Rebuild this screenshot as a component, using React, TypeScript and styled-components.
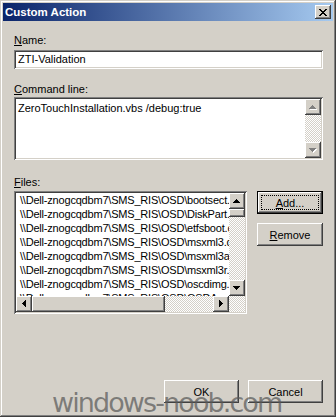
import React from 'react';
import styled, { createGlobalStyle, css } from 'styled-components';

const FACE = '#d4d0c8';
const SHADOW = '#808080';
const DARK = '#404040';
const HILITE = '#ffffff';

const FILE_ROOT = '\\\\Dell-znogcqdbm7\\SMS_RIS\\OSD\\';
const FILES = [
  'bootsect.exe',
  'DiskPart.exe',
  'etfsboot.com',
  'msxml3.dll',
  'msxml3a.dll',
  'msxml3r.dll',
  'oscdimg.exe',
  'OSDApplyOS.exe',
];

const GlobalStyle = createGlobalStyle`
  html, body {
    margin: 0;
    padding: 0;
    background: ${FACE};
  }
  body {
    font-family: "Liberation Sans", Arial, sans-serif;
    font-size: 11px;
    color: #000;
  }
`;

const raised = css`
  box-shadow:
    inset -1px -1px ${DARK},
    inset 1px 1px ${HILITE},
    inset -2px -2px ${SHADOW},
    inset 2px 2px ${FACE};
`;

const sunken = css`
  box-shadow:
    inset 1px 1px ${SHADOW},
    inset -1px -1px ${HILITE},
    inset 2px 2px ${DARK},
    inset -2px -2px ${FACE};
`;

const checker = css`
  background-color: ${HILITE};
  background-image: conic-gradient(${FACE} 25%, ${HILITE} 0 50%, ${FACE} 0 75%, ${HILITE} 0);
  background-size: 2px 2px;
`;

const Window = styled.div`
  position: relative;
  width: 336px;
  height: 417px;
  box-sizing: border-box;
  padding: 3px;
  display: flex;
  flex-direction: column;
  overflow: hidden;
  background: ${FACE};
  box-shadow:
    inset -1px -1px ${DARK},
    inset 1px 1px ${FACE},
    inset -2px -2px ${SHADOW},
    inset 2px 2px ${HILITE};
`;

const TitleBar = styled.div`
  height: 18px;
  display: flex;
  align-items: center;
  justify-content: space-between;
  padding: 0 2px 0 2px;
  background: linear-gradient(to right, #0a246a, #a6caf0);
`;

const Title = styled.span`
  color: #fff;
  font-weight: bold;
  font-size: 11.5px;
`;

const CloseButton = styled.div`
  width: 16px;
  height: 14px;
  display: flex;
  align-items: center;
  justify-content: center;
  background: ${FACE};
  ${raised}
`;

const Body = styled.div`
  flex: 1;
  display: flex;
  flex-direction: column;
  padding: 13px 10px 11px 11px;
`;

const Label = styled.div<{ $top: number; $below: number }>`
  height: 13px;
  line-height: 13px;
  margin-top: ${p => p.$top}px;
  margin-bottom: ${p => p.$below}px;
`;

const TextBox = styled.div`
  height: 19px;
  line-height: 19px;
  box-sizing: border-box;
  padding: 0 4px;
  background: ${HILITE};
  ${sunken}
`;

const TextArea = styled.div`
  height: 63px;
  box-sizing: border-box;
  padding: 2px;
  display: flex;
  background: ${HILITE};
  ${sunken}
`;

const TextAreaContent = styled.div`
  flex: 1;
  padding: 3px 2px;
  line-height: 13px;
`;

const VScroll = styled.div`
  width: 16px;
  display: flex;
  flex-direction: column;
`;

const HScroll = styled.div`
  height: 16px;
  display: flex;
`;

const Track = styled.div`
  flex: 1;
  ${checker}
`;

const Thumb = styled.div<{ $size: number; $vertical?: boolean }>`
  flex: none;
  box-sizing: border-box;
  background: ${FACE};
  ${p => (p.$vertical ? `height: ${p.$size}px;` : `width: ${p.$size}px;`)}
  ${raised}
`;

const ArrowButton = styled.div`
  width: 16px;
  height: 16px;
  flex: none;
  display: flex;
  align-items: center;
  justify-content: center;
  background: ${FACE};
  ${raised}
`;

const FilesRow = styled.div`
  display: flex;
  gap: 10px;
`;

const ListBox = styled.div`
  width: 233px;
  height: 123px;
  box-sizing: border-box;
  padding: 2px;
  display: grid;
  grid-template-columns: 1fr 16px;
  grid-template-rows: 1fr 16px;
  background: ${HILITE};
  ${sunken}
`;

const ListItems = styled.div`
  overflow: hidden;
  padding-left: 4px;
`;

const ListItem = styled.div`
  height: 14px;
  line-height: 14px;
  letter-spacing: -0.2px;
  white-space: nowrap;
`;

const Corner = styled.div`
  ${checker}
`;

const SideButtons = styled.div`
  width: 66px;
  display: flex;
  flex-direction: column;
  gap: 9px;
`;

const Button = styled.div<{ $default?: boolean; $width?: number }>`
  position: relative;
  height: 23px;
  width: ${p => (p.$width ? `${p.$width}px` : 'auto')};
  box-sizing: border-box;
  display: flex;
  align-items: center;
  justify-content: center;
  background: ${FACE};
  ${raised}
  ${p => p.$default && `
    border: 1px solid #000;
    &::after {
      content: '';
      position: absolute;
      inset: 3px;
      border: 1px dotted #000;
    }
  `}
`;

const Footer = styled.div`
  margin-top: auto;
  display: flex;
  justify-content: flex-end;
  gap: 9px;
`;

const Watermark = styled.div`
  position: absolute;
  left: 52px;
  top: 389px;
  font-family: "DejaVu Sans", Verdana, sans-serif;
  font-size: 27px;
  line-height: 27px;
  letter-spacing: -1.9px;
  color: rgba(90, 90, 90, 0.72);
  white-space: nowrap;
  pointer-events: none;
`;

type Dir = 'up' | 'down' | 'left' | 'right';

const ARROW_PATHS: Record<Dir, string> = {
  up: 'M3 0h1v1h-1z M2 1h3v1h-3z M1 2h5v1h-5z M0 3h7v1h-7z',
  down: 'M0 0h7v1h-7z M1 1h5v1h-5z M2 2h3v1h-3z M3 3h1v1h-1z',
  left: 'M3 0h1v7h-1z M2 1h1v5h-1z M1 2h1v3h-1z M0 3h1v1h-1z',
  right: 'M0 0h1v7h-1z M1 1h1v5h-1z M2 2h1v3h-1z M3 3h1v1h-1z',
};

function Arrow({ dir, disabled }: { dir: Dir; disabled?: boolean }) {
  const horizontal = dir === 'left' || dir === 'right';
  const w = horizontal ? 4 : 7;
  const h = horizontal ? 7 : 4;
  return (
    <ArrowButton>
      <svg width={w + 1} height={h + 1} viewBox={`0 0 ${w + 1} ${h + 1}`}>
        {disabled && <path d={ARROW_PATHS[dir]} fill={HILITE} transform="translate(1 1)" />}
        <path d={ARROW_PATHS[dir]} fill={disabled ? SHADOW : '#000'} />
      </svg>
    </ArrowButton>
  );
}

function CloseGlyph() {
  return (
    <svg width="8" height="7" viewBox="0 0 8 7">
      <path
        d="M0 0h2v1h-2z M6 0h2v1h-2z M1 1h2v1h-2z M5 1h2v1h-2z M2 2h4v1h-4z M3 3h2v1h-2z M2 4h4v1h-4z M1 5h2v1h-2z M5 5h2v1h-2z M0 6h2v1h-2z M6 6h2v1h-2z"
        fill="#000"
      />
    </svg>
  );
}

export default function App() {
  return (
    <>
      <GlobalStyle />
      <Window>
        <TitleBar>
          <Title>Custom Action</Title>
          <CloseButton>
            <CloseGlyph />
          </CloseButton>
        </TitleBar>
        <Body>
          <Label $top={0} $below={3}>
            <u>N</u>ame:
          </Label>
          <TextBox>ZTI-Validation</TextBox>

          <Label $top={14} $below={1}>
            <u>C</u>ommand line:
          </Label>
          <TextArea>
            <TextAreaContent>ZeroTouchInstallation.vbs /debug:true</TextAreaContent>
            <VScroll>
              <Arrow dir="up" disabled />
              <Track />
              <Arrow dir="down" disabled />
            </VScroll>
          </TextArea>

          <Label $top={16} $below={2}>
            <u>F</u>iles:
          </Label>
          <FilesRow>
            <ListBox>
              <ListItems>
                {FILES.map(f => (
                  <ListItem key={f}>{FILE_ROOT + f}</ListItem>
                ))}
              </ListItems>
              <VScroll>
                <Arrow dir="up" />
                <Thumb $vertical $size={8} />
                <Track />
                <Arrow dir="down" />
              </VScroll>
              <HScroll>
                <Arrow dir="left" />
                <Thumb $size={133} />
                <Track />
                <Arrow dir="right" />
              </HScroll>
              <Corner />
            </ListBox>
            <SideButtons>
              <Button $default>
                <span><u>A</u>dd...</span>
              </Button>
              <Button>
                <span><u>R</u>emove</span>
              </Button>
            </SideButtons>
          </FilesRow>

          <Footer>
            <Button $width={75}>OK</Button>
            <Button $width={75}>Cancel</Button>
          </Footer>
        </Body>
        <Watermark>windows-noob.com</Watermark>
      </Window>
    </>
  );
}
